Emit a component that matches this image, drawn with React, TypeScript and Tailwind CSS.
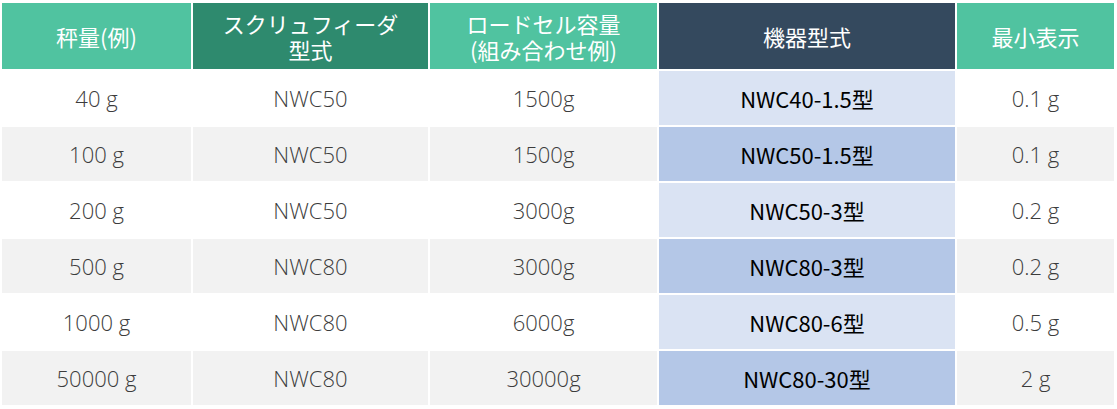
import React from "react";

const rows = [
  ["40 g", "NWC50", "1500g", "NWC40-1.5型", "0.1 g"],
  ["100 g", "NWC50", "1500g", "NWC50-1.5型", "0.1 g"],
  ["200 g", "NWC50", "3000g", "NWC50-3型", "0.2 g"],
  ["500 g", "NWC80", "3000g", "NWC80-3型", "0.2 g"],
  ["1000 g", "NWC80", "6000g", "NWC80-6型", "0.5 g"],
  ["50000 g", "NWC80", "30000g", "NWC80-30型", "2 g"],
];

const jp = "font-['Noto_Sans_CJK_JP','Noto_Sans',sans-serif]";
const body = "font-['Open_Sans','Noto_Sans_CJK_JP',sans-serif]";
const head = `text-white flex items-center justify-center text-center text-[22px] leading-[26px] ${jp}`;
const cell = `flex items-center justify-center text-[22px] font-light text-[#3c3c3c] ${body}`;

export default function App() {
  return (
    <div className="w-[1117px] h-[409px] bg-white pl-[2px] pt-[3px]">
      <div className="grid grid-cols-[189px_235px_227px_296px_157px] grid-rows-[66px_repeat(6,54px)] gap-[2px]">
        <div className={`bg-[#50c3a0] ${head}`}>秤量(例)</div>
        <div className={`bg-[#2e8a6e] ${head}`}>
          <p>
            スクリュフィーダ
            <br />
            型式
          </p>
        </div>
        <div className={`bg-[#50c3a0] ${head}`}>
          <p>
            ロードセル容量
            <br />
            (組み合わせ例)
          </p>
        </div>
        <div className={`bg-[#34495e] ${head}`}>機器型式</div>
        <div className={`bg-[#50c3a0] ${head}`}>最小表示</div>
        {rows.map((r, i) => {
          const even = i % 2 === 1;
          const bg = even ? "bg-[#f2f2f2]" : "bg-white";
          const blue = even ? "bg-[#b4c7e7]" : "bg-[#dae3f3]";
          return (
            <React.Fragment key={i}>
              <div className={`${bg} ${cell}`}>{r[0]}</div>
              <div className={`${bg} ${cell}`}>{r[1]}</div>
              <div className={`${bg} ${cell}`}>{r[2]}</div>
              <div className={`${blue} flex items-center justify-center text-[22px] text-black ${jp}`}>{r[3]}</div>
              <div className={`${bg} ${cell}`}>{r[4]}</div>
            </React.Fragment>
          );
        })}
      </div>
    </div>
  );
}
